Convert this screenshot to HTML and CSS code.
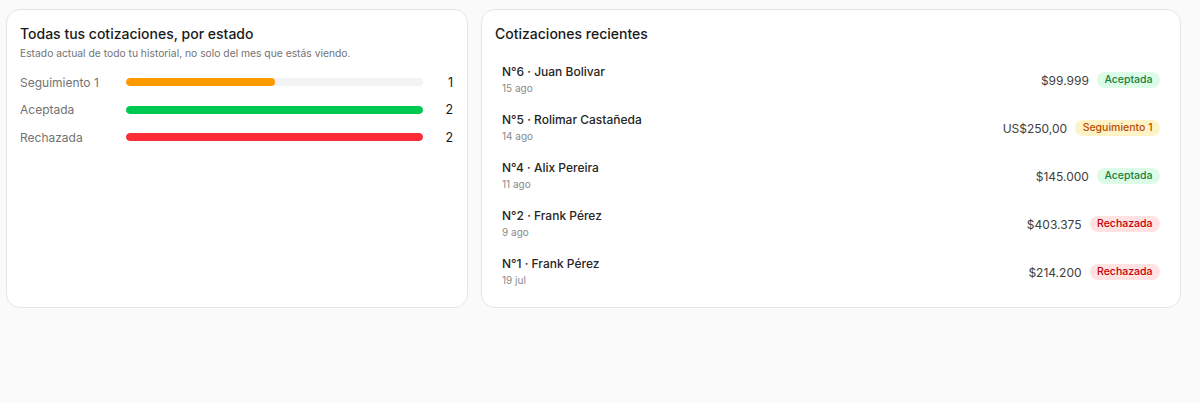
FILE: index.html
```html
<!DOCTYPE html>
<html lang="es">
<head>
<meta charset="utf-8">
<link rel="stylesheet" href="styles.css">
</head>
<body>
<div class="grid">
  <section class="card status">
    <h2 class="card-title">Todas tus cotizaciones, por estado</h2>
    <p class="card-sub">Estado actual de todo tu historial, no solo del mes que estás viendo.</p>
    <div class="bars">
      <div class="bar-row">
        <span class="bar-label">Seguimiento 1</span>
        <div class="track"><div class="fill fill-orange" style="width:50%"></div></div>
        <span class="bar-count">1</span>
      </div>
      <div class="bar-row">
        <span class="bar-label">Aceptada</span>
        <div class="track"><div class="fill fill-green" style="width:100%"></div></div>
        <span class="bar-count">2</span>
      </div>
      <div class="bar-row">
        <span class="bar-label">Rechazada</span>
        <div class="track"><div class="fill fill-red" style="width:100%"></div></div>
        <span class="bar-count">2</span>
      </div>
    </div>
  </section>
  <section class="card recent">
    <h2 class="card-title">Cotizaciones recientes</h2>
    <ul class="list">
      <li class="item">
        <div class="item-main"><div class="item-name">N°6 · Juan Bolivar</div><div class="item-date">15 ago</div></div>
        <div class="item-side"><span class="amount">$99.999</span><span class="badge badge-green">Aceptada</span></div>
      </li>
      <li class="item">
        <div class="item-main"><div class="item-name">N°5 · Rolimar Castañeda</div><div class="item-date">14 ago</div></div>
        <div class="item-side"><span class="amount">US$250,00</span><span class="badge badge-amber">Seguimiento 1</span></div>
      </li>
      <li class="item">
        <div class="item-main"><div class="item-name">N°4 · Alix Pereira</div><div class="item-date">11 ago</div></div>
        <div class="item-side"><span class="amount">$145.000</span><span class="badge badge-green">Aceptada</span></div>
      </li>
      <li class="item">
        <div class="item-main"><div class="item-name">N°2 · Frank Pérez</div><div class="item-date">9 ago</div></div>
        <div class="item-side"><span class="amount">$403.375</span><span class="badge badge-red">Rechazada</span></div>
      </li>
      <li class="item">
        <div class="item-main"><div class="item-name">N°1 · Frank Pérez</div><div class="item-date">19 jul</div></div>
        <div class="item-side"><span class="amount">$214.200</span><span class="badge badge-red">Rechazada</span></div>
      </li>
    </ul>
  </section>
</div>
</body>
</html>
```

FILE: styles.css
```css
* { box-sizing: border-box; }
html, body { margin: 0; padding: 0; }
body {
  background: #fafafa;
  font-family: Inter, "Noto Sans", "Liberation Sans", sans-serif;
  color: #171717;
  padding: 9px 19px 0 6px;
}
.grid {
  display: grid;
  grid-template-columns: 462px 1fr;
  gap: 13px;
  align-items: stretch;
}
.card {
  background: #fff;
  border: 1px solid #e5e5e5;
  border-radius: 14px;
}
.status { padding: 14px 13px 14px 13px; }
.recent { padding: 14px 13px 11px 13px; }
.card-title {
  margin: 0;
  font-size: 14px;
  line-height: 20px;
  font-weight: 500;
  color: #1a1a1a;
}
.card-sub {
  margin: 1px 0 0;
  font-size: 10.3px;
  line-height: 16px;
  color: #737373;
}
.bars {
  margin-top: 12px;
  display: flex;
  flex-direction: column;
  gap: 9.5px;
}
.bar-row {
  display: grid;
  grid-template-columns: 106px 297px 1fr;
  align-items: center;
  height: 18px;
}
.bar-label { font-size: 12px; color: #737373; }
.bar-count { font-size: 12.5px; text-align: right; color: #171717; padding-right: 1px; }
.track {
  height: 8px;
  background: #f4f4f4;
  border-radius: 4px;
  overflow: hidden;
}
.fill { height: 100%; border-radius: 4px; }
.fill-orange { background: #fe9a00; }
.fill-green { background: #00c950; }
.fill-red { background: #fb2c36; }
.list {
  list-style: none;
  margin: 12px 0 0;
  padding: 0;
}
.item {
  display: flex;
  justify-content: space-between;
  align-items: center;
  height: 48px;
  padding: 0 7px;
}
.item-name { font-size: 12px; line-height: 16px; font-weight: 500; color: #262626; }
.item-date { font-size: 10px; line-height: 16px; color: #8a8a8a; }
.item-side { display: flex; align-items: center; gap: 8px; }
.amount { font-size: 12px; color: #404040; }
.badge {
  font-size: 10.5px;
  line-height: 16px;
  font-weight: 500;
  padding: 0 7.5px;
  border-radius: 9px;
}
.badge-green { background: #dcfce7; color: #15803d; }
.badge-amber { background: #fef3c6; color: #bb4d00; }
.badge-red { background: #ffe2e2; color: #c10007; }
```
